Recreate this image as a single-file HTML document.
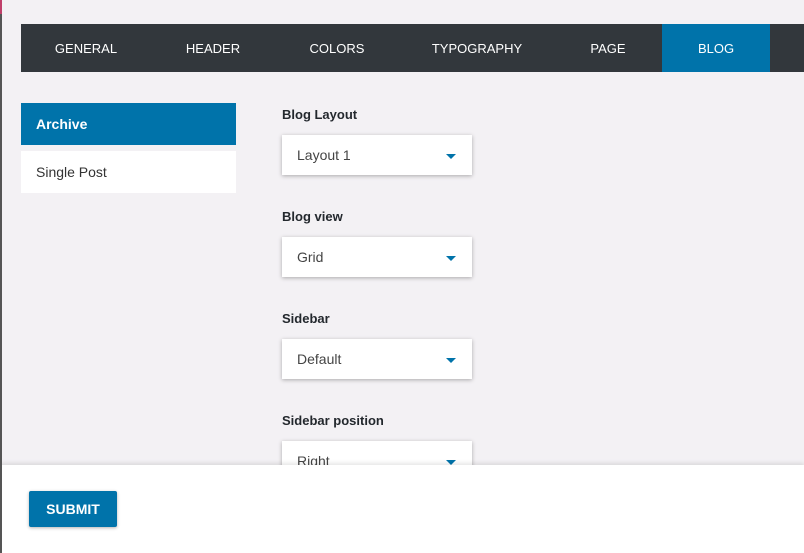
<!DOCTYPE html>
<html><head><style>
body{margin:0;width:804px;height:553px;background:#f3f1f4;font-family:"Liberation Sans",sans-serif;position:relative;overflow:hidden}
.edge{position:absolute;left:0;top:0;width:2px;height:553px;background:#555}
.edge2{position:absolute;left:0;top:0;width:2px;height:14px;background:#c0406a}
.tabs{position:absolute;left:21px;top:24px;width:783px;height:48px;background:#32373c}
.tab{position:absolute;top:0;height:48px;line-height:50px;color:#fff;font-size:13px;text-align:center;transform:translateX(-50%)}
.blog{position:absolute;left:662px;top:24px;width:108px;height:48px;background:#0073aa}
.side{position:absolute;left:21px;width:215px;height:42px;line-height:42px;font-size:14px;padding-left:15px;box-sizing:border-box}
.lbl{position:absolute;left:282px;font-size:13px;font-weight:bold;color:#23282d}
.sel{position:absolute;left:282px;width:190px;height:40px;background:#fff;box-shadow:0 1px 4px rgba(0,0,0,.3);font-size:14px;color:#444;line-height:40px;padding-left:15px;box-sizing:border-box}
.sel:after{content:"";position:absolute;right:16px;top:19px;border-left:5px solid transparent;border-right:5px solid transparent;border-top:5px solid #0073aa}
.bottom{position:absolute;left:0;top:465px;width:804px;height:88px;background:#fff;box-shadow:0 -2px 4px rgba(0,0,0,.1)}
.btn{position:absolute;left:29px;top:26px;width:88px;height:36px;background:#0073aa;color:#fff;font-weight:bold;font-size:14px;line-height:36px;text-align:center;border-radius:2px;box-shadow:0 1px 3px rgba(0,0,0,.3)}
</style></head><body>
<div class="tabs"></div>
<div class="blog"></div>
<div class="tab" style="left:86px;top:24px">GENERAL</div>
<div class="tab" style="left:213px;top:24px">HEADER</div>
<div class="tab" style="left:337px;top:24px">COLORS</div>
<div class="tab" style="left:477px;top:24px">TYPOGRAPHY</div>
<div class="tab" style="left:608px;top:24px">PAGE</div>
<div class="tab" style="left:716px;top:24px">BLOG</div>
<div class="side" style="top:103px;background:#0073aa;color:#fff;font-weight:bold">Archive</div>
<div class="side" style="top:151px;background:#fff;color:#333">Single Post</div>
<div class="lbl" style="top:107px">Blog Layout</div>
<div class="sel" style="top:135px">Layout 1</div>
<div class="lbl" style="top:209px">Blog view</div>
<div class="sel" style="top:237px">Grid</div>
<div class="lbl" style="top:311px">Sidebar</div>
<div class="sel" style="top:339px">Default</div>
<div class="lbl" style="top:413px">Sidebar position</div>
<div class="sel" style="top:441px">Right</div>
<div class="bottom"><div class="btn">SUBMIT</div></div>
<div class="edge"></div><div class="edge2"></div>
</body></html>
